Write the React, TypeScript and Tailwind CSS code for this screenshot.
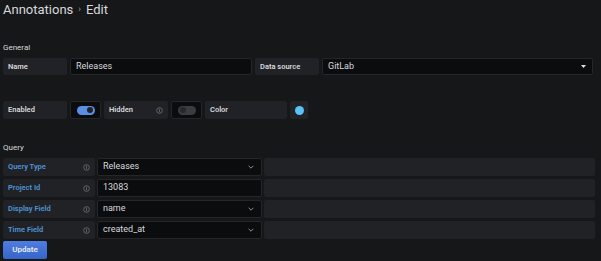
import React from 'react'

const Info = () => (
  <svg width="7" height="7" viewBox="0 0 16 16" className="flex-shrink-0">
    <circle cx="8" cy="8" r="6.5" fill="none" stroke="#7b7d80" strokeWidth="1.6" />
    <path d="M8 7v4M8 5v0.5" stroke="#7b7d80" strokeWidth="1.6" strokeLinecap="round" />
  </svg>
)

const Chevron = () => (
  <svg width="6" height="4" viewBox="0 0 10 6" className="flex-shrink-0">
    <path d="M1 1l4 4 4-4" fill="none" stroke="#9fa1a4" strokeWidth="1.5" />
  </svg>
)

const Label = ({ text, w, info, blue }: { text: string; w: string; info?: boolean; blue?: boolean }) => (
  <div
    className={`${w} h-full flex items-center justify-between px-[5px] bg-[#202226] rounded-[2px] text-[7.5px] font-semibold ${
      blue ? 'text-[#4f95d8]' : 'text-[#d8d9da]'
    }`}
  >
    <span>{text}</span>
    {info && <Info />}
  </div>
)

const Toggle = ({ on }: { on: boolean }) => (
  <div className="w-[31px] h-full flex items-center justify-center bg-[#0b0c0e] border border-[#262628] rounded-[2px]">
    <div
      className={`w-[18px] h-[9px] rounded-full flex items-center px-[2px] ${
        on ? 'bg-[#5a8fe6] justify-end' : 'bg-[#3b3c3f] justify-start'
      }`}
    >
      <div className={`w-[6px] h-[6px] rounded-full ${on ? 'bg-[#202226]' : 'bg-[#27282b]'}`} />
    </div>
  </div>
)

const QueryRow = ({ label, value, select }: { label: string; value: string; select?: boolean }) => (
  <div className="flex h-[18px] gap-[2px]">
    <Label text={label} w="w-[92px]" info blue />
    <div className="w-[165px] h-full flex items-center justify-between pl-[5px] pr-[7px] bg-[#0b0c0e] border border-[#262628] rounded-[2px] text-[9px] text-[#d8d9da]">
      <span>{value}</span>
      {select && <Chevron />}
    </div>
    <div className="flex-1 h-full bg-[#202226] rounded-[2px]" />
  </div>
)

export default function App() {
  return (
    <div
      className="w-[601px] h-[261px] bg-[#161719] pt-[1px] pl-[3px] pr-[6px] overflow-hidden"
      style={{ fontFamily: 'Roboto, "Liberation Sans", sans-serif' }}
    >
      <div className="h-[18px] flex items-center gap-[5px] text-[13px] text-[#d8d9da]">
        <span>Annotations</span>
        <span className="text-[9px] text-[#9fa1a4]">›</span>
        <span>Edit</span>
      </div>

      <div className="mt-[24px] text-[8px] leading-[10px] text-[#d8d9da]">General</div>
      <div className="mt-[5px] flex h-[17px] gap-[3px]">
        <Label text="Name" w="w-[64px]" />
        <div className="w-[182px] h-full flex items-center px-[5px] bg-[#0b0c0e] border border-[#262628] rounded-[2px] text-[9px] text-[#d8d9da]">
          Releases
        </div>
        <Label text="Data source" w="w-[64px]" />
        <div className="flex-1 mr-[2px] h-full flex items-center justify-between pl-[5px] pr-[6px] bg-[#0b0c0e] border border-[#262628] rounded-[2px] text-[9px] text-[#d8d9da]">
          <span>GitLab</span>
          <svg width="5" height="3" viewBox="0 0 10 6">
            <path d="M0 0h10L5 6z" fill="#e0e0e0" />
          </svg>
        </div>
      </div>

      <div className="mt-[26px] flex h-[18px] gap-[3px]">
        <Label text="Enabled" w="w-[64px]" />
        <Toggle on />
        <Label text="Hidden" w="w-[64px]" info />
        <Toggle on={false} />
        <Label text="Color" w="w-[82px]" />
        <div className="w-[18px] h-full flex items-center justify-center bg-[#202226] rounded-[2px]">
          <div className="w-[9px] h-[9px] rounded-full bg-[#5ac2f7]" />
        </div>
      </div>

      <div className="mt-[24px] text-[8px] leading-[10px] text-[#d8d9da]">Query</div>
      <div className="mt-[5px] flex flex-col gap-[3px]">
        <QueryRow label="Query Type" value="Releases" select />
        <QueryRow label="Project Id" value="13083" />
        <QueryRow label="Display Field" value="name" select />
        <QueryRow label="Time Field" value="created_at" select />
      </div>

      <button className="block mt-[2px] w-[44px] h-[18px] rounded-[2px] bg-gradient-to-b from-[#4f7ee0] to-[#3565c8] text-[8px] leading-[18px] font-semibold text-[#e8ecf5]">
        Update
      </button>
    </div>
  )
}
